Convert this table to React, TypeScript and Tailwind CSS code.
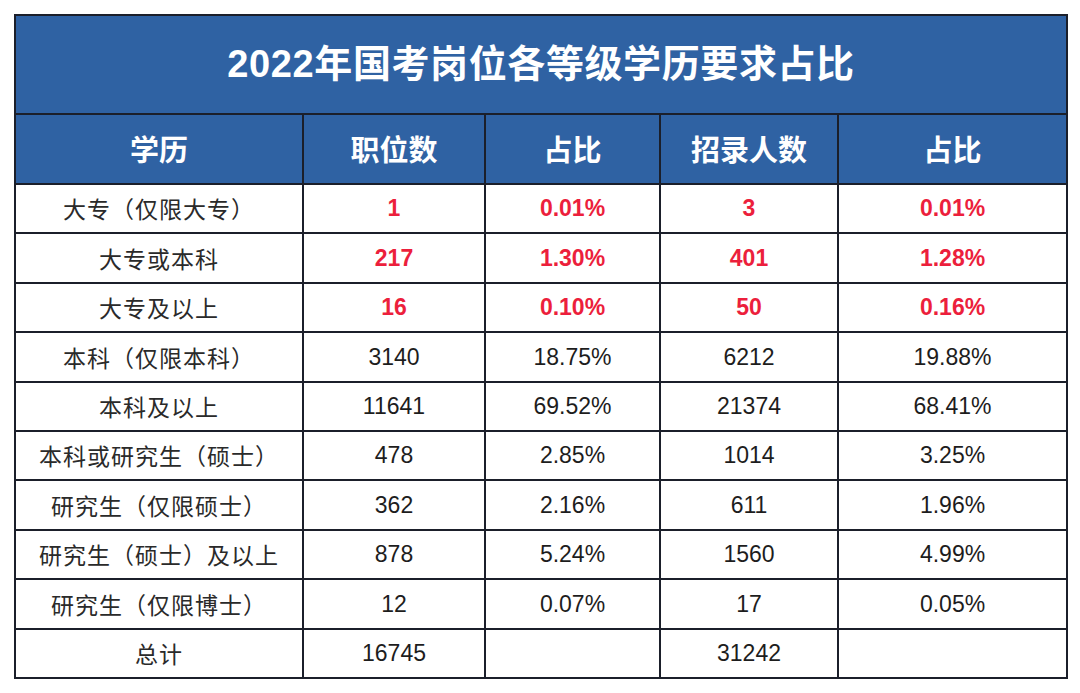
import React from 'react';

type Row = { label: string; posts: string; postsPct: string; hires: string; hiresPct: string; red?: boolean };

const rows: Row[] = [
    { label: '大专（仅限大专）', posts: '1', postsPct: '0.01%', hires: '3', hiresPct: '0.01%', red: true },
    { label: '大专或本科', posts: '217', postsPct: '1.30%', hires: '401', hiresPct: '1.28%', red: true },
    { label: '大专及以上', posts: '16', postsPct: '0.10%', hires: '50', hiresPct: '0.16%', red: true },
    { label: '本科（仅限本科）', posts: '3140', postsPct: '18.75%', hires: '6212', hiresPct: '19.88%' },
    { label: '本科及以上', posts: '11641', postsPct: '69.52%', hires: '21374', hiresPct: '68.41%' },
    { label: '本科或研究生（硕士）', posts: '478', postsPct: '2.85%', hires: '1014', hiresPct: '3.25%' },
    { label: '研究生（仅限硕士）', posts: '362', postsPct: '2.16%', hires: '611', hiresPct: '1.96%' },
    { label: '研究生（硕士）及以上', posts: '878', postsPct: '5.24%', hires: '1560', hiresPct: '4.99%' },
    { label: '研究生（仅限博士）', posts: '12', postsPct: '0.07%', hires: '17', hiresPct: '0.05%' },
    { label: '总计', posts: '16745', postsPct: '', hires: '31242', hiresPct: '' },
];

const headers = ['学历', '职位数', '占比', '招录人数', '占比'];

export default function App() {
    const cjk = "font-['Noto_Sans_CJK_SC',sans-serif]";
    const num = "font-['Liberation_Sans','Noto_Sans_CJK_SC',sans-serif]";

    return (
        <div className="w-[1080px] h-[693px] bg-white pt-[14px] pl-[14px]">
            <table className="border-collapse table-fixed w-[1052px]">
                <colgroup>
                    <col className="w-[288px]" />
                    <col className="w-[182px]" />
                    <col className="w-[175px]" />
                    <col className="w-[178px]" />
                    <col className="w-[229px]" />
                </colgroup>
                <thead>
                    {/* Title */}
                    <tr className="h-[99px]">
                        <th
                            colSpan={5}
                            className={`border-2 border-[#1b1f2a] bg-[#2f62a3] text-white text-[38px] font-bold tracking-[0.6px] ${num}`}
                        >
                            2022年国考岗位各等级学历要求占比
                        </th>
                    </tr>
                    {/* Column headers */}
                    <tr className="h-[70px]">
                        {headers.map((h, i) => (
                            <th
                                key={i}
                                className={`border-2 border-[#1b1f2a] bg-[#2f62a3] text-white text-[29px] font-bold ${cjk}`}
                            >
                                {h}
                            </th>
                        ))}
                    </tr>
                </thead>
                <tbody>
                    {rows.map((r, i) => {
                        const val = r.red
                            ? `text-[#ec1f3c] font-bold text-[23px] ${num}`
                            : `text-[#1d1d1d] text-[23px] ${num}`;
                        return (
                            <tr key={i} className="h-[49.4px]">
                                <td className={`border-2 border-[#1b1f2a] text-center text-[23px] text-[#2a2a2a] tracking-[1px] ${cjk}`}>
                                    {r.label}
                                </td>
                                <td className={`border-2 border-[#1b1f2a] text-center ${val}`}>{r.posts}</td>
                                <td className={`border-2 border-[#1b1f2a] text-center ${val}`}>{r.postsPct}</td>
                                <td className={`border-2 border-[#1b1f2a] text-center ${val}`}>{r.hires}</td>
                                <td className={`border-2 border-[#1b1f2a] text-center ${val}`}>{r.hiresPct}</td>
                            </tr>
                        );
                    })}
                </tbody>
            </table>
        </div>
    );
}
